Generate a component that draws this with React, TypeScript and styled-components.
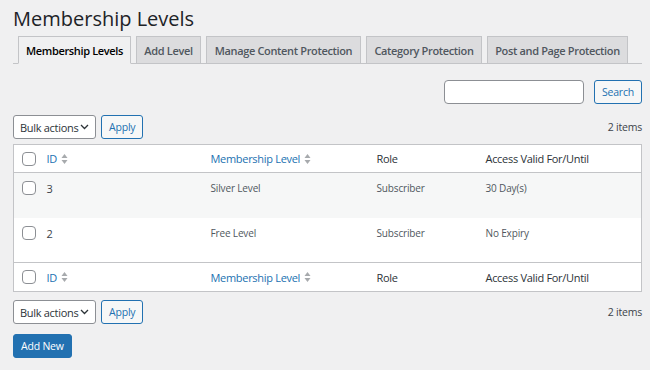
import React from 'react';
import styled, { createGlobalStyle } from 'styled-components';

const GlobalStyle = createGlobalStyle`
  html, body {
    margin: 0;
    padding: 0;
    background: #f0f0f1;
    font-family: "Open Sans", "Noto Sans", sans-serif;
    color: #3c434a;
  }
  * { box-sizing: border-box; }
`;

const Page = styled.div`
  padding: 5px 8px 0 13px;
  width: 650px;
`;

const Title = styled.h1`
  margin: 0;
  font-size: 20px;
  font-weight: 400;
  color: #1d2327;
  line-height: 24px;
  padding: 2px 0 0 0;
`;

const TabBar = styled.div`
  display: flex;
  gap: 5px;
  margin-top: 5px;
  padding-left: 5px;
  border-bottom: 1px solid #c3c4c7;
  height: 28px;
`;

const Tab = styled.div<{ $active?: boolean; $w: number }>`
  width: ${p => p.$w}px;
  height: ${p => (p.$active ? '28px' : '27px')};
  display: flex;
  align-items: center;
  justify-content: center;
  white-space: nowrap;
  font-size: 11px;
  letter-spacing: -0.35px;
  font-weight: 600;
  color: ${p => (p.$active ? '#000' : '#50575e')};
  background: ${p => (p.$active ? '#f0f0f1' : '#dcdcde')};
  border: 1px solid #c3c4c7;
  border-bottom: ${p => (p.$active ? '1px solid #f0f0f1' : 'none')};
  margin-bottom: ${p => (p.$active ? '-1px' : '0')};
  align-self: flex-end;
`;

const SearchRow = styled.div`
  display: flex;
  justify-content: flex-end;
  gap: 10px;
  margin-top: 16px;
`;

const SearchInput = styled.div`
  width: 140px;
  height: 24px;
  background: #fff;
  border: 1px solid #8c8f94;
  border-radius: 4px;
`;

const Button = styled.div<{ $primary?: boolean }>`
  height: 24px;
  padding: 0 7px;
  display: inline-flex;
  align-items: center;
  white-space: nowrap;
  font-size: 10.5px;
  letter-spacing: -0.2px;
  border-radius: 3px;
  border: 1px solid #2271b1;
  color: ${p => (p.$primary ? '#fff' : '#2271b1')};
  background: ${p => (p.$primary ? '#2271b1' : '#f6f7f7')};
`;

const NavRow = styled.div<{ $top?: boolean }>`
  display: flex;
  align-items: center;
  gap: 5px;
  margin-top: ${p => (p.$top ? '11px' : '8px')};
  margin-bottom: ${p => (p.$top ? '5px' : '9px')};
  height: 24px;
`;

const Select = styled.div`
  width: 83px;
  height: 24px;
  background: #fff;
  border: 1px solid #8c8f94;
  border-radius: 3px;
  display: flex;
  align-items: center;
  justify-content: space-between;
  white-space: nowrap;
  padding: 0 6px 0 6px;
  font-size: 11px;
  letter-spacing: -0.3px;
  color: #2c3338;
`;

const Count = styled.div`
  margin-left: auto;
  font-size: 10.5px;
  letter-spacing: -0.2px;
  color: #3c434a;
`;

const Table = styled.table`
  width: 629px;
  border-collapse: collapse;
  background: #fff;
  border: 1px solid #c3c4c7;
  table-layout: fixed;
`;

const Th = styled.th<{ $w?: number; $foot?: boolean }>`
  width: ${p => (p.$w ? `${p.$w}px` : 'auto')};
  text-align: left;
  font-weight: 400;
  font-size: 11px;
  letter-spacing: -0.3px;
  white-space: nowrap;
  color: #2c3338;
  height: ${p => (p.$foot ? '29px' : '28px')};
  padding: 0;
  border-bottom: ${p => (p.$foot ? 'none' : '1px solid #c3c4c7')};
  border-top: ${p => (p.$foot ? '1px solid #c3c4c7' : 'none')};
  vertical-align: middle;
`;

const SortLink = styled.span`
  color: #2271b1;
  display: inline-flex;
  align-items: center;
  gap: 4px;
`;

const Tr = styled.tr<{ $alt?: boolean }>`
  background: ${p => (p.$alt ? '#f6f7f7' : '#fff')};
`;

const Td = styled.td`
  height: 45px;
  padding: 8px 0 0 0;
  vertical-align: top;
  white-space: nowrap;
  font-size: 10px;
  letter-spacing: -0.15px;
  color: #50575e;
`;

const CheckCell = styled.div`
  padding-left: 8px;
  display: flex;
`;

const Check = styled.span`
  width: 14px;
  height: 14px;
  border: 1px solid #8c8f94;
  border-radius: 4px;
  background: #fff;
  display: inline-block;
`;

const IdText = styled.span`
  color: #3c434a;
  font-size: 11px;
`;

const SortArrows = () => (
  <svg width="7" height="12" viewBox="0 0 7 12">
    <path d="M3.5 1 L6.5 5 L0.5 5 Z" fill="#a7aaad" />
    <path d="M3.5 11 L6.5 7 L0.5 7 Z" fill="#a7aaad" />
  </svg>
);

const Chevron = () => (
  <svg width="9" height="6" viewBox="0 0 9 6">
    <path d="M1 1 L4.5 4.5 L8 1" fill="none" stroke="#2c3338" strokeWidth="1.3" />
  </svg>
);

const HeaderCells: React.FC<{ foot?: boolean }> = ({ foot }) => (
  <tr>
    <Th $w={33} $foot={foot}>
      <CheckCell><Check /></CheckCell>
    </Th>
    <Th $w={164} $foot={foot}>
      <SortLink>ID <SortArrows /></SortLink>
    </Th>
    <Th $w={166} $foot={foot}>
      <SortLink>Membership Level <SortArrows /></SortLink>
    </Th>
    <Th $w={109} $foot={foot}>Role</Th>
    <Th $foot={foot}>Access Valid For/Until</Th>
  </tr>
);

const levels = [
  { id: '3', name: 'Silver Level', role: 'Subscriber', access: '30 Day(s)' },
  { id: '2', name: 'Free Level', role: 'Subscriber', access: 'No Expiry' },
];

const tabs = [
  { label: 'Membership Levels', w: 113 },
  { label: 'Add Level', w: 65 },
  { label: 'Manage Content Protection', w: 155 },
  { label: 'Category Protection', w: 116 },
  { label: 'Post and Page Protection', w: 141 },
];

const App: React.FC = () => (
  <>
    <GlobalStyle />
    <Page>
      <Title>Membership Levels</Title>
      <TabBar>
        {tabs.map((t, i) => (
          <Tab key={t.label} $active={i === 0} $w={t.w}>{t.label}</Tab>
        ))}
      </TabBar>
      <SearchRow>
        <SearchInput />
        <Button>Search</Button>
      </SearchRow>
      <NavRow $top>
        <Select>Bulk actions <Chevron /></Select>
        <Button>Apply</Button>
        <Count>2 items</Count>
      </NavRow>
      <Table>
        <thead>
          <HeaderCells />
        </thead>
        <tbody>
          {levels.map((l, i) => (
            <Tr key={l.id} $alt={i % 2 === 0}>
              <Td><CheckCell><Check /></CheckCell></Td>
              <Td><IdText>{l.id}</IdText></Td>
              <Td>{l.name}</Td>
              <Td>{l.role}</Td>
              <Td>{l.access}</Td>
            </Tr>
          ))}
        </tbody>
        <tfoot>
          <HeaderCells foot />
        </tfoot>
      </Table>
      <NavRow>
        <Select>Bulk actions <Chevron /></Select>
        <Button>Apply</Button>
        <Count>2 items</Count>
      </NavRow>
      <Button $primary>Add New</Button>
    </Page>
  </>
);

export default App;
